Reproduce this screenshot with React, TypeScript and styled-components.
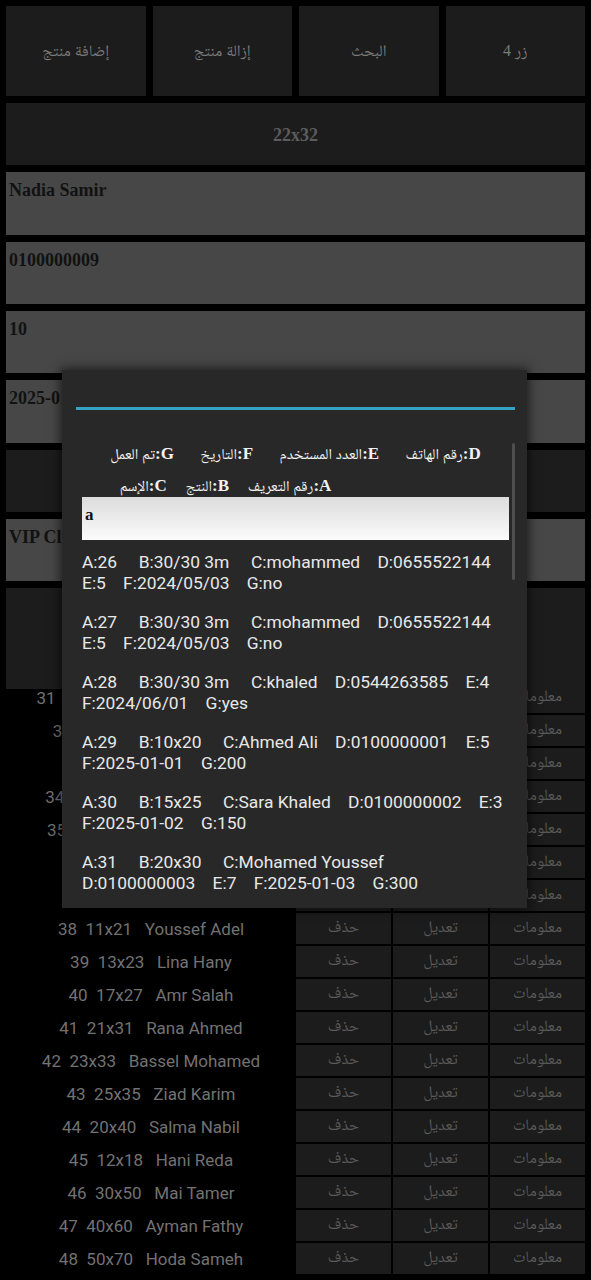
import React from "react";
import styled, { createGlobalStyle } from "styled-components";

const GlobalStyle = createGlobalStyle`
  html, body { margin: 0; padding: 0; background: #000; }
  body { width: 591px; height: 1280px; overflow: hidden; }
  * { box-sizing: border-box; }
`;

const SERIF = `"Liberation Serif", "Noto Naskh Arabic", "Noto Sans Arabic", "DejaVu Sans", serif`;
const SANS = `Roboto, "Noto Sans", "DejaVu Sans", sans-serif`;

const Screen = styled.div`
  position: relative;
  width: 591px;
  height: 1280px;
  display: flex;
  flex-direction: column;
  background: #000;
  overflow: hidden;
`;

const Form = styled.div`
  display: flex;
  flex-direction: column;
  gap: 7px;
  padding: 6px 6px 0;
`;

const TopRow = styled.div`
  display: grid;
  grid-template-columns: repeat(4, 1fr);
  gap: 7px;
  height: 90px;
`;

const DarkButton = styled.div<{ $h?: number }>`
  height: ${(p) => (p.$h ? `${p.$h}px` : "auto")};
  background: #1c1c1c;
  color: #7a7a7a;
  font-family: ${SERIF};
  font-size: 16px;
  padding-top: 2px;
  display: flex;
  align-items: center;
  justify-content: center;
`;

const SizeLabel = styled.span`
  font-weight: bold;
  font-size: 18px;
  color: #5c5c5c;
`;

const Field = styled.div<{ $h: number }>`
  height: ${(p) => p.$h}px;
  background: #474747;
  color: #121212;
  font-family: ${SERIF};
  font-weight: bold;
  font-size: 18px;
  line-height: 22px;
  padding: 7px 3px;
  white-space: nowrap;
  overflow: hidden;
`;

const ListViewport = styled.div`
  flex: 1;
  overflow: hidden;
  padding: 0 6px;
`;

const List = styled.div`
  display: flex;
  flex-direction: column;
  gap: 2px;
  margin-top: -7px;
`;

const Row = styled.div`
  display: grid;
  grid-template-columns: 290px 1fr;
  height: 31px;
`;

const RowText = styled.div`
  font-family: ${SANS};
  font-size: 17px;
  color: #727272;
  white-space: pre;
  display: flex;
  align-items: center;
  justify-content: center;
`;

const Actions = styled.div`
  display: grid;
  grid-template-columns: repeat(3, 1fr);
  gap: 2px;
`;

const ActionCell = styled.div`
  background: #1c1c1c;
  color: #5a5a5a;
  font-family: ${SERIF};
  font-size: 16px;
  display: flex;
  align-items: center;
  justify-content: center;
`;

const Dialog = styled.div`
  position: absolute;
  left: 62px;
  top: 370px;
  width: 465px;
  height: 538px;
  background: #282828;
  box-shadow: 0 0 10px 2px rgba(0, 0, 0, 0.55);
  display: flex;
  flex-direction: column;
  padding: 37px 12px 0 14px;
`;

const TitleLine = styled.div`
  height: 3px;
  background: #35a3c4;
`;

const Scroller = styled.div`
  position: relative;
  flex: 1;
  overflow: hidden;
  margin-top: 28px;
  padding: 0 6px;
`;

const Thumb = styled.div`
  position: absolute;
  right: 0;
  top: 5px;
  width: 3px;
  height: 137px;
  border-radius: 2px;
  background: #4e4e4e;
`;

const Header = styled.div`
  font-family: ${SERIF};
  font-size: 15px;
  color: #f2f2f2;
  line-height: 32px;
  height: 59px;
  direction: rtl;
  white-space: pre;
`;

const HeaderLine = styled.div<{ $shift?: number }>`
  text-align: center;
  padding-right: ${(p) => p.$shift ?? 0}px;
`;

const Key = styled.span`
  font-weight: bold;
  font-size: 17px;
`;

const Search = styled.div`
  height: 43px;
  width: 427px;
  background: linear-gradient(#dcdcdc, #fbfbfb);
  color: #111;
  font-family: ${SERIF};
  font-weight: bold;
  font-size: 17px;
  padding: 8px 3px;
`;

const Items = styled.div`
  display: flex;
  flex-direction: column;
  gap: 18px;
  padding-top: 12px;
  width: 425px;
`;

const Item = styled.div`
  font-family: ${SANS};
  font-size: 17.4px;
  line-height: 21px;
  color: #e8e8e8;
  white-space: pre-wrap;
`;

const buttons = ["إضافة منتج", "إزالة منتج", "البحث", "زر 4"];

const records: string[][] = [
  ["A:26", "B:30/30 3m", "C:mohammed", "D:0655522144", "E:5", "F:2024/05/03", "G:no"],
  ["A:27", "B:30/30 3m", "C:mohammed", "D:0655522144", "E:5", "F:2024/05/03", "G:no"],
  ["A:28", "B:30/30 3m", "C:khaled", "D:0544263585", "E:4", "F:2024/06/01", "G:yes"],
  ["A:29", "B:10x20", "C:Ahmed Ali", "D:0100000001", "E:5", "F:2025-01-01", "G:200"],
  ["A:30", "B:15x25", "C:Sara Khaled", "D:0100000002", "E:3", "F:2025-01-02", "G:150"],
  ["A:31", "B:20x30", "C:Mohamed Youssef", "D:0100000003", "E:7", "F:2025-01-03", "G:300"],
];

const fmt = (r: string[]) =>
  r[0] + "     " + r[1] + "     " + r[2] + "    " + r[3] + "    " + r[4] + "    " + r[5] + "    " + r[6];

const headerTop: [string, string][] = [
  ["D:", "رقم الهاتف"],
  ["E:", "العدد المستخدم"],
  ["F:", "التاريخ"],
  ["G:", "تم العمل"],
];
const headerBottom: [string, string][] = [
  ["A:", "رقم التعريف"],
  ["B:", "النتج"],
  ["C:", "الإسم"],
];

const rows: [number, string, string][] = [
  [31, "20x30", "Mohamed Youssef"],
  [32, "25x35", "Fatma Hassan"],
  [33, "30x40", "Omar Nabil"],
  [34, "18x28", "Mostafa Ibrahim"],
  [35, "16x26", "Heba Mahmoud"],
  [36, "22x32", "Nour Ali"],
  [37, "19x29", "Karim Adel"],
  [38, "11x21", "Youssef Adel"],
  [39, "13x23", "Lina Hany"],
  [40, "17x27", "Amr Salah"],
  [41, "21x31", "Rana Ahmed"],
  [42, "23x33", "Bassel Mohamed"],
  [43, "25x35", "Ziad Karim"],
  [44, "20x40", "Salma Nabil"],
  [45, "12x18", "Hani Reda"],
  [46, "30x50", "Mai Tamer"],
  [47, "40x60", "Ayman Fathy"],
  [48, "50x70", "Hoda Sameh"],
];

function HeaderFields({ items, gap }: { items: [string, string][]; gap: string }) {
  return (
    <>
      {items.map(([k, v], i) => (
        <React.Fragment key={k}>
          <Key>{k}</Key>
          {v}
          {i < items.length - 1 ? gap : ""}
        </React.Fragment>
      ))}
    </>
  );
}

export default function App() {
  return (
    <>
      <GlobalStyle />
      <Screen>
        <Form>
          <TopRow>
            {buttons.map((b) => (
              <DarkButton key={b}>{b}</DarkButton>
            ))}
          </TopRow>
          <DarkButton $h={62}>
            <SizeLabel>22x32</SizeLabel>
          </DarkButton>
          <Field $h={63}>Nadia Samir</Field>
          <Field $h={62}>0100000009</Field>
          <Field $h={62}>10</Field>
          <Field $h={63}>2025-01-09</Field>
          <DarkButton $h={62} />
          <Field $h={62}>VIP Client</Field>
          <DarkButton $h={101} />
        </Form>
        <ListViewport>
          <List>
            {rows.map(([n, size, name]) => (
              <Row key={n}>
                <RowText>{`${n}  ${size}   ${name}`}</RowText>
                <Actions>
                  <ActionCell>حذف</ActionCell>
                  <ActionCell>تعديل</ActionCell>
                  <ActionCell>معلومات</ActionCell>
                </Actions>
              </Row>
            ))}
          </List>
        </ListViewport>

        <Dialog>
          <TitleLine />
          <Scroller>
            <Thumb />
            <Header>
              <HeaderLine>
                <HeaderFields items={headerTop} gap={"       "} />
              </HeaderLine>
              <HeaderLine $shift={140}>
                <HeaderFields items={headerBottom} gap={"     "} />
              </HeaderLine>
            </Header>
            <Search>a</Search>
            <Items>
              {records.map((r) => (
                <Item key={r[0]}>{fmt(r)}</Item>
              ))}
            </Items>
          </Scroller>
        </Dialog>
      </Screen>
    </>
  );
}
